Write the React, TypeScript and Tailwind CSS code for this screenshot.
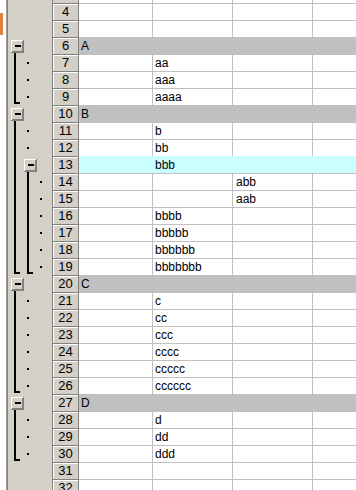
import React from "react";

type Row = {
  n: number;
  a?: string;
  b?: string;
  c?: string;
  kind?: "group" | "sel";
};

const rows: Row[] = [
  { n: 4 },
  { n: 5 },
  { n: 6, a: "A", kind: "group" },
  { n: 7, b: "aa" },
  { n: 8, b: "aaa" },
  { n: 9, b: "aaaa" },
  { n: 10, a: "B", kind: "group" },
  { n: 11, b: "b" },
  { n: 12, b: "bb" },
  { n: 13, b: "bbb", kind: "sel" },
  { n: 14, c: "abb" },
  { n: 15, c: "aab" },
  { n: 16, b: "bbbb" },
  { n: 17, b: "bbbbb" },
  { n: 18, b: "bbbbbb" },
  { n: 19, b: "bbbbbbb" },
  { n: 20, a: "C", kind: "group" },
  { n: 21, b: "c" },
  { n: 22, b: "cc" },
  { n: 23, b: "ccc" },
  { n: 24, b: "cccc" },
  { n: 25, b: "ccccc" },
  { n: 26, b: "cccccc" },
  { n: 27, a: "D", kind: "group" },
  { n: 28, b: "d" },
  { n: 29, b: "dd" },
  { n: 30, b: "ddd" },
  { n: 31 },
  { n: 32 },
];

// outline groups: header row, last row, level
const groups = [
  { from: 6, to: 9, level: 1 },
  { from: 10, to: 19, level: 1 },
  { from: 13, to: 19, level: 2 },
  { from: 20, to: 26, level: 1 },
  { from: 27, to: 30, level: 1 },
];

const top = (n: number) => 3 + (n - 4) * 17;

const Outline = () => {
  const dots: { x: number; y: number }[] = [];
  groups.forEach((g) => {
    for (let n = g.from + 1; n <= g.to; n++) {
      const inner = groups.some((h) => h.level > g.level && n >= h.from && n <= h.to);
      if (!inner) dots.push({ x: g.level === 1 ? 27 : 40, y: top(n) + 8 });
    }
  });
  return (
    <svg width="44" height="490" className="block">
      <g transform="translate(-8,0)">
        {groups.map((g) => {
          const bx = g.level === 1 ? 11 : 24;
          const lx = bx + 3;
          const by = top(g.from) + 3;
          const end = top(g.to) + 14;
          return (
            <g key={g.from + "-" + g.level}>
              <rect x={lx} y={by + 13} width="2" height={end - by - 11} fill="#000" />
              <rect x={lx} y={end} width="6" height="2" fill="#000" />
              <rect x={bx} y={by} width="13" height="13" fill="#808080" />
              <rect x={bx} y={by} width="12" height="12" fill="#fff" />
              <rect x={bx + 1} y={by + 1} width="11" height="11" fill="#808080" />
              <rect x={bx + 1} y={by + 1} width="10" height="10" fill="#d4d0c8" />
              <rect x={bx + 4} y={by + 5} width="6" height="2" fill="#000" />
            </g>
          );
        })}
        {dots.map((d, i) => (
          <rect key={i} x={d.x} y={d.y} width="2" height="2" fill="#000" />
        ))}
      </g>
    </svg>
  );
};

const SheetRow = ({ r }: { r: Row }) => {
  const fill =
    r.kind === "group" ? "bg-[#c0c0c0] border-transparent" : r.kind === "sel" ? "bg-[#ccffff] border-transparent" : "border-[#c0c0c0]";
  return (
    <div className="flex h-[17px] shrink-0">
      <div className="w-[27px] shrink-0 border-t border-l border-r border-[#808080] bg-[#d4d0c8] shadow-[inset_1px_1px_0_#fff] text-center text-[13px] leading-[16px] text-black">
        {r.n}
      </div>
      <div className={`flex flex-1 text-[12px] leading-[16px] text-black ${r.kind ? (r.kind === "group" ? "bg-[#c0c0c0]" : "bg-[#ccffff]") : ""}`}>
        <div className={`w-[74px] shrink-0 border-t border-r pl-[2px] ${fill}`}>{r.a}</div>
        <div className={`w-[80px] shrink-0 border-t border-r pl-[2px] ${fill}`}>{r.b}</div>
        <div className={`w-[80px] shrink-0 border-t border-r pl-[3px] ${fill}`}>{r.c}</div>
        <div className={`flex-1 border-t ${fill}`}></div>
      </div>
    </div>
  );
};

const App = () => {
  return (
    <div className="flex w-[356px] h-[490px] overflow-hidden bg-white font-['Liberation_Sans',Arial,sans-serif]">
      <div className="flex w-[6px] shrink-0 flex-col bg-white">
        <div className="h-[13px]"></div>
        <div className="h-[22px] w-[3px] bg-[#e0823e]"></div>
      </div>
      <div className="w-px shrink-0 bg-[#a0a0a0]"></div>
      <div className="w-px shrink-0 bg-[#808080]"></div>
      <div className="w-[44px] shrink-0 bg-[#d4d0c8]">
        <Outline />
      </div>
      <div className="flex flex-1 flex-col">
        <div className="flex h-[3px] shrink-0">
          <div className="w-[27px] shrink-0 border-l border-r border-[#808080] bg-[#d4d0c8]"></div>
          <div className="flex flex-1">
            <div className="w-[74px] shrink-0 border-r border-[#c0c0c0]"></div>
            <div className="w-[80px] shrink-0 border-r border-[#c0c0c0]"></div>
            <div className="w-[80px] shrink-0 border-r border-[#c0c0c0]"></div>
          </div>
        </div>
        {rows.map((r) => (
          <SheetRow key={r.n} r={r} />
        ))}
      </div>
    </div>
  );
};

export default App;
